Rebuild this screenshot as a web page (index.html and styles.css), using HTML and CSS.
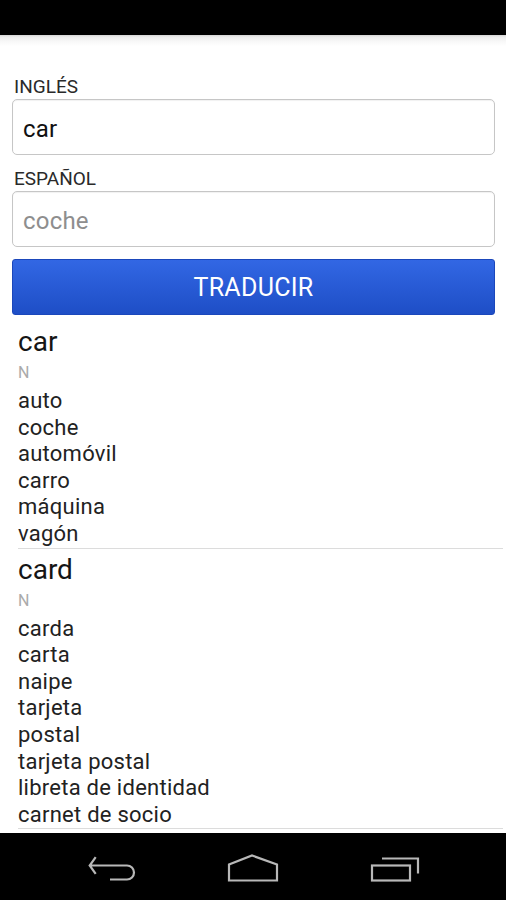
FILE: index.html
```html
<!DOCTYPE html>
<html>

<head>
    <meta charset="utf-8">
    <link rel="stylesheet" href="styles.css">
</head>

<body>
    <div class="screen">
        <div class="statusbar"></div>

        <div class="content">
            <form class="form" onsubmit="return false">
                <label class="label" for="english">INGLÉS</label>
                <input class="field" id="english" value="car">
                <label class="label" for="spanish">ESPAÑOL</label>
                <input class="field" id="spanish" placeholder="coche">
                <button class="translate" type="submit">TRADUCIR</button>
            </form>

            <div class="results">
                <div class="entry">
                    <div class="word">car</div>
                    <div class="pos">N</div>
                    <div class="meaning">auto</div>
                    <div class="meaning">coche</div>
                    <div class="meaning">automóvil</div>
                    <div class="meaning">carro</div>
                    <div class="meaning">máquina</div>
                    <div class="meaning">vagón</div>
                </div>
                <div class="entry">
                    <div class="word">card</div>
                    <div class="pos">N</div>
                    <div class="meaning">carda</div>
                    <div class="meaning">carta</div>
                    <div class="meaning">naipe</div>
                    <div class="meaning">tarjeta</div>
                    <div class="meaning">postal</div>
                    <div class="meaning">tarjeta postal</div>
                    <div class="meaning">libreta de identidad</div>
                    <div class="meaning">carnet de socio</div>
                </div>
            </div>
        </div>

        <div class="navbar">
            <div class="navkey">
                <svg width="60" height="40" viewBox="0 0 60 40">
                    <path d="M13.7 10.2 L7.7 18.5 L13.7 26.8 M7.7 18.5 H45 A7 7 0 0 1 45 32.5 H28" />
                </svg>
            </div>
            <div class="navkey">
                <svg width="60" height="40" viewBox="0 0 60 40">
                    <path d="M6 33.5 V17.5 L29 8.5 L54 17.5 V33.5 Z" />
                </svg>
            </div>
            <div class="navkey">
                <svg width="60" height="40" viewBox="0 0 60 40">
                    <rect x="8" y="18.5" width="38" height="15" />
                    <path d="M18 11.5 H54 V26.5" />
                </svg>
            </div>
        </div>
    </div>
</body>

</html>
```

FILE: styles.css
```css
html,
body {
    margin: 0;
    padding: 0;
    background: #000;
}

.screen {
    display: flex;
    flex-direction: column;
    width: 506px;
    height: 900px;
    font-family: Roboto, "Liberation Sans", sans-serif;
}

.statusbar {
    height: 35px;
    flex: none;
    background: #000;
}

.content {
    flex: 1;
    overflow: hidden;
    background: linear-gradient(#d4d4d4 0, #ededed 2px, #f7f7f7 6px, #fff 11px);
}

/* form */

.form {
    display: flex;
    flex-direction: column;
    padding: 41px 11px 0 12px;
}

.label {
    font-size: 19px;
    line-height: 22px;
    color: #2a2a2a;
    padding-left: 2px;
    margin-bottom: 1px;
}

.field {
    box-sizing: border-box;
    height: 56px;
    margin: 0 0 13px;
    padding: 3px 10px 0;
    border: 1px solid #c6c6c6;
    border-radius: 5px;
    box-shadow: inset 0 1px 1px rgba(0, 0, 0, 0.06);
    font-family: inherit;
    font-size: 24px;
    letter-spacing: 0.2px;
    color: #111;
    background: #fff;
    outline: none;
}

.field::placeholder {
    color: #8e8e8e;
}

#spanish {
    margin-bottom: 12px;
}

.translate {
    height: 56px;
    border: 1px solid #1b47bb;
    border-radius: 3px;
    background: linear-gradient(#3267e4, #1e4ec6);
    color: #fff;
    font-family: inherit;
    font-size: 25px;
    letter-spacing: 0.3px;
    padding: 0;
    cursor: pointer;
}

/* results */

.results {
    margin: 6px 3px 0 18px;
}

.entry {
    padding-top: 5px;
    border-bottom: 1px solid #dcdcdc;
}

.word {
    font-size: 28px;
    line-height: 32px;
    color: #151515;
}

.pos {
    font-size: 16px;
    line-height: 30px;
    color: #aaa;
}

.meaning {
    font-size: 22px;
    line-height: 26.6px;
    letter-spacing: 0.25px;
    color: #222;
}

/* navigation */

.navbar {
    height: 67px;
    flex: none;
    display: flex;
    justify-content: center;
    align-items: center;
    background: #000;
}

.navkey {
    width: 141px;
    display: flex;
    justify-content: center;
}

.navkey svg {
    fill: none;
    stroke: #b8b8b8;
    stroke-width: 2.2;
}
```
